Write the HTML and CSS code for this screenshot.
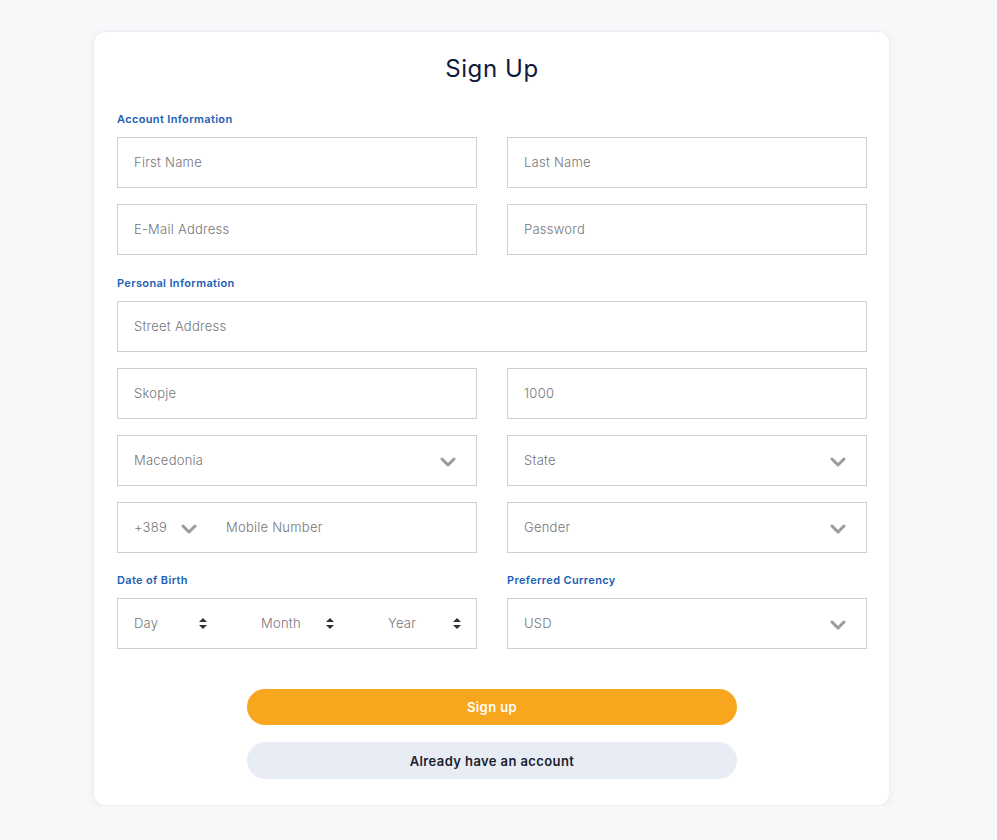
FILE: index.html
```html
<!DOCTYPE html>
<html lang="en">
<head>
<meta charset="utf-8">
<title>Sign Up</title>
<link rel="stylesheet" href="styles.css">
</head>
<body>
<div class="card">
  <h1 class="title">Sign Up</h1>

  <div class="section-label">Account Information</div>
  <div class="grid">
    <div class="field"><span class="ph">First Name</span></div>
    <div class="field"><span class="ph">Last Name</span></div>
    <div class="field"><span class="ph">E-Mail Address</span></div>
    <div class="field"><span class="ph">Password</span></div>
  </div>

  <div class="section-label gap-top">Personal Information</div>
  <div class="grid">
    <div class="field full"><span class="ph">Street Address</span></div>
    <div class="field"><span class="ph">Skopje</span></div>
    <div class="field"><span class="ph">1000</span></div>
    <div class="field select"><span class="ph">Macedonia</span>
      <svg class="chev" viewBox="0 0 16 10" width="16" height="10"><path d="M2 2 L8 8 L14 2" fill="none" stroke="#9b9b9b" stroke-width="3" stroke-linecap="round" stroke-linejoin="round"/></svg>
    </div>
    <div class="field select"><span class="ph">State</span>
      <svg class="chev" viewBox="0 0 16 10" width="16" height="10"><path d="M2 2 L8 8 L14 2" fill="none" stroke="#9b9b9b" stroke-width="3" stroke-linecap="round" stroke-linejoin="round"/></svg>
    </div>
    <div class="field phone">
      <span class="ph code">+389</span>
      <svg class="chev small" viewBox="0 0 16 10" width="16" height="10"><path d="M2 2 L8 8 L14 2" fill="none" stroke="#9b9b9b" stroke-width="3" stroke-linecap="round" stroke-linejoin="round"/></svg>
      <span class="ph mobile">Mobile Number</span>
    </div>
    <div class="field select"><span class="ph">Gender</span>
      <svg class="chev" viewBox="0 0 16 10" width="16" height="10"><path d="M2 2 L8 8 L14 2" fill="none" stroke="#9b9b9b" stroke-width="3" stroke-linecap="round" stroke-linejoin="round"/></svg>
    </div>
    <div class="col">
      <div class="section-label gap-top-sm">Date of Birth</div>
      <div class="field dob">
        <div class="dob-item"><span class="ph">Day</span>
          <svg class="ud" viewBox="0 0 8 11" width="8" height="11"><path d="M4 0 L8 4 L0 4 Z M0 7 L8 7 L4 11 Z" fill="#333"/></svg>
        </div>
        <div class="dob-item"><span class="ph">Month</span>
          <svg class="ud" viewBox="0 0 8 11" width="8" height="11"><path d="M4 0 L8 4 L0 4 Z M0 7 L8 7 L4 11 Z" fill="#333"/></svg>
        </div>
        <div class="dob-item"><span class="ph">Year</span>
          <svg class="ud" viewBox="0 0 8 11" width="8" height="11"><path d="M4 0 L8 4 L0 4 Z M0 7 L8 7 L4 11 Z" fill="#333"/></svg>
        </div>
      </div>
    </div>
    <div class="col">
      <div class="section-label gap-top-sm">Preferred Currency</div>
      <div class="field select"><span class="ph">USD</span>
        <svg class="chev" viewBox="0 0 16 10" width="16" height="10"><path d="M2 2 L8 8 L14 2" fill="none" stroke="#9b9b9b" stroke-width="3" stroke-linecap="round" stroke-linejoin="round"/></svg>
      </div>
    </div>
  </div>

  <div class="actions">
    <button class="btn primary">Sign up</button>
    <button class="btn secondary">Already have an account</button>
  </div>
</div>
</body>
</html>
```

FILE: styles.css
```css
* { box-sizing: border-box; }

body {
  margin: 0;
  background: #f8f8fb;
  font-family: "Inter", "Open Sans", sans-serif;
}

.card {
  width: 797px;
  margin: 31px 0 0 93px;
  background: #fff;
  border: 1px solid #eeeef2;
  border-radius: 12px;
  box-shadow: 0 2px 8px rgba(0, 0, 0, 0.05);
  padding: 21px 22px 26px 23px;
}

.title {
  margin: 0;
  text-align: center;
  font-size: 24px;
  line-height: 32px;
  font-weight: 400;
  color: #0e1a3c;
  letter-spacing: 0.6px;
}

.section-label {
  margin-top: 26px;
  margin-bottom: 10px;
  font-size: 11px;
  line-height: 16px;
  font-weight: 600;
  color: #2160b4;
  letter-spacing: 0.35px;
}

.section-label.gap-top { margin-top: 20px; }
.section-label.gap-top-sm { margin-top: 3px; }

.grid {
  display: grid;
  grid-template-columns: 1fr 1fr;
  column-gap: 30px;
  row-gap: 16px;
}

.col { display: flex; flex-direction: column; }

.field {
  height: 51px;
  border: 1px solid #cfcfd3;
  display: flex;
  align-items: center;
  padding: 0 20px 2px 16px;
  background: #fff;
}

.field.full { grid-column: 1 / 3; }

.ph {
  font-size: 13px;
  color: #76767c;
  font-weight: 300;
  letter-spacing: 0.25px;
}

.select { justify-content: space-between; }

.chev { flex: none; margin-top: 4px; }

.phone .code { width: 47px; }
.phone .chev.small { margin-right: 29px; }

.dob { padding: 0 0 2px 16px; gap: 47px; }

.dob-item {
  width: 80px;
  display: flex;
  align-items: center;
  justify-content: space-between;
}

.dob-item .ud { margin-right: 7px; margin-top: 2px; }

.actions {
  margin-top: 40px;
  display: flex;
  flex-direction: column;
  align-items: center;
  gap: 17px;
}

.btn {
  width: 490px;
  border: none;
  border-radius: 19px;
  font-family: inherit;
  font-size: 13px;
  font-weight: 600;
  letter-spacing: 0.4px;
  cursor: pointer;
}

.btn.primary {
  height: 36px;
  background: #f9a61f;
  color: #fff;
}

.btn.secondary {
  height: 37px;
  background: #e8edf5;
  color: #1c2030;
}
```
